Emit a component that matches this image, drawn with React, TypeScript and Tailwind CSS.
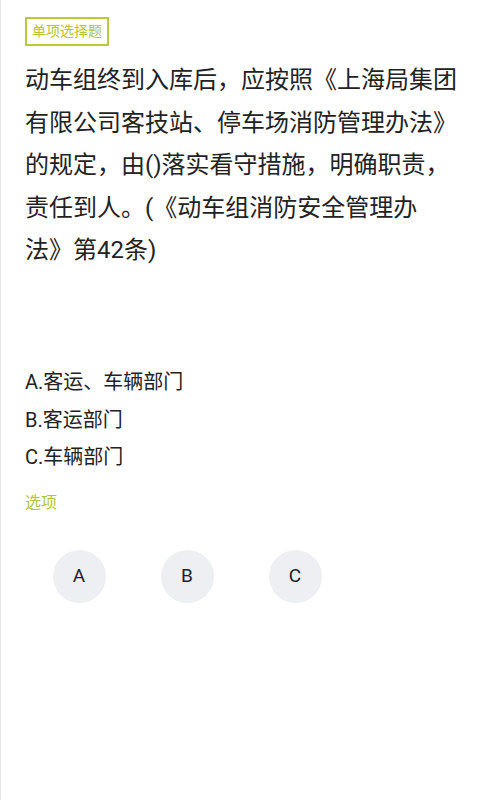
const OPTIONS = [
  { key: "A", text: "客运、车辆部门" },
  { key: "B", text: "客运部门" },
  { key: "C", text: "车辆部门" },
];

const FONT = "font-['Roboto','Noto_Sans_CJK_SC',sans-serif]";

export default function App() {
  return (
    <div className={`min-h-[800px] bg-white border-l border-[#e6e6e6] [text-spacing-trim:space-all] ${FONT}`}>
      <div className="pl-6 pr-5 pt-[17px]">
        <span className="inline-block border-2 border-[#b9ca3f] px-[5px] py-[2px] text-[14px] leading-[21px] text-[#b3c43a]">
          单项选择题
        </span>

        <div className="mt-[13px] min-h-[305px] text-[24px] leading-[42.5px] text-[#222]">
          动车组终到入库后，应按照《上海局集团有限公司客技站、停车场消防管理办法》的规定，由()落实看守措施，明确职责，责任到人。(《动车组消防安全管理办法》第42条)
        </div>

        <div className="text-[20px] leading-[37.5px] text-[#222]">
          {OPTIONS.map((o) => (
            <div key={o.key}>
              {o.key}.{o.text}
            </div>
          ))}
        </div>

        <div className="mt-[15px] text-[16px] leading-[22px] text-[#b3c43a]">选项</div>

        <div className="mt-[36px] grid w-[432px] grid-cols-4">
          {OPTIONS.map((o) => (
            <div key={o.key} className="flex justify-center">
              <button className="size-[53px] rounded-full bg-[#eeeff2] text-[19px] text-[#222]">
                {o.key}
              </button>
            </div>
          ))}
        </div>
      </div>
    </div>
  );
}
